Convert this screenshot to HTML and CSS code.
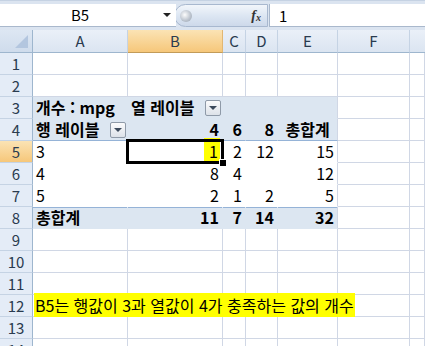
FILE: index.html
```html
<!DOCTYPE html>
<html lang="ko">
<head>
<meta charset="utf-8">
<link rel="stylesheet" href="styles.css">
</head>
<body>
<div class="app">
  <div class="fbar">
    <div class="namebox"><span class="ref">B5</span><span class="nb-arrow"></span></div>
    <div class="pill"><span class="knob"></span><span class="fx">f<sub>x</sub></span></div>
    <div class="formula">1</div>
  </div>
  <div class="sheet">
    <div class="corner"><span class="tri"></span></div>
    <div class="ch">A</div><div class="ch sel">B</div><div class="ch">C</div><div class="ch">D</div><div class="ch">E</div><div class="ch">F</div><div class="ch last"></div>

    <div class="rh">1</div><div class="c"></div><div class="c"></div><div class="c"></div><div class="c"></div><div class="c"></div><div class="c"></div><div class="c"></div>
    <div class="rh">2</div><div class="c"></div><div class="c"></div><div class="c"></div><div class="c"></div><div class="c"></div><div class="c"></div><div class="c"></div>

    <div class="rh">3</div>
    <div class="c pvh b">개수 : mpg</div>
    <div class="c pvh b split">열 레이블<span class="dd"></span></div>
    <div class="c pvh"></div><div class="c pvh"></div><div class="c pvh e"></div>
    <div class="c"></div><div class="c"></div>

    <div class="rh">4</div>
    <div class="c pvh hb b split">행 레이블<span class="dd"></span></div>
    <div class="c pvh hb b r">4</div>
    <div class="c pvh hb b r">6</div>
    <div class="c pvh hb b r">8</div>
    <div class="c pvh hb b e">&nbsp;총합계</div>
    <div class="c"></div><div class="c"></div>

    <div class="rh sel">5</div>
    <div class="c pv">3</div>
    <div class="c pv r active"><span class="hl">1</span></div>
    <div class="c pv r">2</div>
    <div class="c pv r">12</div>
    <div class="c pv r e">15</div>
    <div class="c"></div><div class="c"></div>

    <div class="rh">6</div>
    <div class="c pv">4</div>
    <div class="c pv r">8</div>
    <div class="c pv r">4</div>
    <div class="c pv r"></div>
    <div class="c pv r e">12</div>
    <div class="c"></div><div class="c"></div>

    <div class="rh">7</div>
    <div class="c pv">5</div>
    <div class="c pv r">2</div>
    <div class="c pv r">1</div>
    <div class="c pv r">2</div>
    <div class="c pv r e">5</div>
    <div class="c"></div><div class="c"></div>

    <div class="rh">8</div>
    <div class="c pvt b">총합계</div>
    <div class="c pvt b r">11</div>
    <div class="c pvt b r">7</div>
    <div class="c pvt b r">14</div>
    <div class="c pvt b r e">32</div>
    <div class="c"></div><div class="c"></div>

    <div class="rh">9</div><div class="c"></div><div class="c"></div><div class="c"></div><div class="c"></div><div class="c"></div><div class="c"></div><div class="c"></div>
    <div class="rh">10</div><div class="c"></div><div class="c"></div><div class="c"></div><div class="c"></div><div class="c"></div><div class="c"></div><div class="c"></div>
    <div class="rh">11</div><div class="c"></div><div class="c"></div><div class="c"></div><div class="c"></div><div class="c"></div><div class="c"></div><div class="c"></div>
    <div class="rh">12</div><div class="c over"><span class="note">B5는 행값이 3과 열값이 4가 충족하는 값의 개수</span></div><div class="c nl"></div><div class="c nl"></div><div class="c nl"></div><div class="c nl"></div><div class="c"></div><div class="c"></div>
    <div class="rh">13</div><div class="c"></div><div class="c"></div><div class="c"></div><div class="c"></div><div class="c"></div><div class="c"></div><div class="c"></div>
    <div class="rh">14</div><div class="c"></div><div class="c"></div><div class="c"></div><div class="c"></div><div class="c"></div><div class="c"></div><div class="c"></div>
  </div>
</div>
</body>
</html>
```

FILE: styles.css
```css
* { box-sizing: border-box; }
html, body { margin: 0; padding: 0; background: #fff; }
body {
  width: 425px;
  height: 346px;
  overflow: hidden;
  font-family: "Noto Sans CJK KR", "Noto Sans", sans-serif;
  font-size: 15px;
  color: #000;
}
.app { width: 425px; }

/* formula bar */
.fbar {
  height: 30px;
  display: flex;
  align-items: stretch;
  background: #dbe4f0;
  padding: 3px 0 3px 0;
  border-top: 1px solid #c5d2e3;
}
.namebox {
  width: 176px;
  background: #fff;
  border-bottom: 1px solid #a9b8cc;
  display: flex;
  align-items: center;
  position: relative;
}
.ref {
  width: 160px;
  text-align: center;
  line-height: 22px;
  font-size: 15px;
}
.nb-arrow {
  width: 0; height: 0;
  border-left: 4px solid transparent;
  border-right: 4px solid transparent;
  border-top: 4px solid #222;
  margin-left: 3px;
}
.pill {
  width: 94px;
  margin-left: -2px;
  border: 1px solid #a8b8cf;
  border-radius: 12px 0 0 12px;
  background: linear-gradient(#f2f6fb, #dbe5f2 55%, #cdd9ea);
  display: flex;
  align-items: center;
  justify-content: space-between;
  padding: 0 6px 0 5px;
}
.knob {
  width: 12px; height: 12px;
  border-radius: 50%;
  background: radial-gradient(circle at 40% 40%, #fdfdfd, #b8c0cb 60%, #9aa4b1);
}
.fx {
  font-family: "Liberation Serif", serif;
  font-style: italic;
  font-weight: bold;
  font-size: 14px;
  color: #333;
}
.fx sub { font-size: 10px; vertical-align: -1px; }
.formula {
  flex: 1;
  background: #fff;
  margin-left: 1px;
  border-bottom: 1px solid #a9b8cc;
  border-left: 1px solid #a9b8cc;
  padding-left: 9px;
  line-height: 23px;
  font-size: 15px;
}

/* sheet grid */
.sheet {
  display: grid;
  grid-template-columns: 33px 95px 95px 23px 32px 60px 72px 15px;
  grid-template-rows: 23px;
  grid-auto-rows: 22px;
}
.corner {
  background: linear-gradient(#dde7f3, #cfdcec);
  border-right: 1px solid #9eb6ce;
  border-bottom: 1px solid #9eb6ce;
  position: relative;
}
.tri {
  position: absolute;
  right: 4px; bottom: 4px;
  width: 0; height: 0;
  border-left: 13px solid transparent;
  border-bottom: 13px solid #b3c6df;
}
.ch {
  background: linear-gradient(#eaf0f8, #dbe5f1);
  border-right: 1px solid #c5d3e4;
  border-bottom: 1px solid #9eb6ce;
  text-align: center;
  line-height: 22px;
  color: #2a3b4f;
  font-size: 15px;
}
.ch.sel {
  background: linear-gradient(#fbe3b4, #f6c77a);
  border-bottom-color: #c29b59;
  border-right-color: #e2b772;
}
.ch.last { border-right: none; }
.rh {
  background: #e4ecf7;
  border-right: 1px solid #9eb6ce;
  border-bottom: 1px solid #c5d3e4;
  text-align: center;
  line-height: 21px;
  color: #2a3b4f;
  font-size: 15px;
}
.rh.sel {
  background: linear-gradient(#fbe3b4, #f6c77a);
}
.c {
  border-right: 1px solid #d0d7e5;
  border-bottom: 1px solid #d0d7e5;
  line-height: 21px;
  padding: 0 3px;
  white-space: nowrap;
  position: relative;
  font-size: 16px;
}
.r { text-align: right; }
.b { font-weight: bold; }

.pvh { background: #dce6f1; border-right-color: #dce6f1; border-bottom-color: #dce6f1; }
.pvh.hb { border-bottom-color: #95b3d7; }
.pv { background: #fff; border-right-color: #fff; border-bottom-color: #fff; }
.pvt { background: #dce6f1; border-right-color: #dce6f1; border-bottom-color: #dce6f1; }
.pvt { box-shadow: inset 0 1px 0 #95b3d7; }
.e { border-right-color: #d0d7e5; }
.pv.e { border-right-color: #d0d7e5; }

.split { display: flex; align-items: center; justify-content: space-between; padding-right: 1px; }
.dd {
  width: 16px; height: 16px;
  border: 1px solid #8f9aa8;
  border-radius: 2px;
  background: linear-gradient(#fbfbfc, #dde2e9);
  position: relative;
  flex: none;
}
.dd::after {
  content: "";
  position: absolute;
  left: 3px; top: 5px;
  border-left: 4px solid transparent;
  border-right: 4px solid transparent;
  border-top: 4px solid #3c4a5c;
}

.active { z-index: 2; }
.active::after {
  content: "";
  position: absolute;
  left: -2px; top: -2px; right: -2px; bottom: -2px;
  border: 3px solid #000;
  pointer-events: none;
}
.active::before {
  content: "";
  position: absolute;
  right: -5px; bottom: -5px;
  width: 6px; height: 6px;
  background: #000;
  border: 1px solid #fff;
  z-index: 3;
}
.hl {
  background: #ffff00;
  padding: 1px 2px 1px 5px;
  margin-right: -1px;
}

.over { overflow: visible; z-index: 1; padding-left: 1px; }
.nl { border-right-color: #d0d7e5; }
.note {
  background: #ffff00;
  padding: 0 1px;
  position: relative;
}
```
